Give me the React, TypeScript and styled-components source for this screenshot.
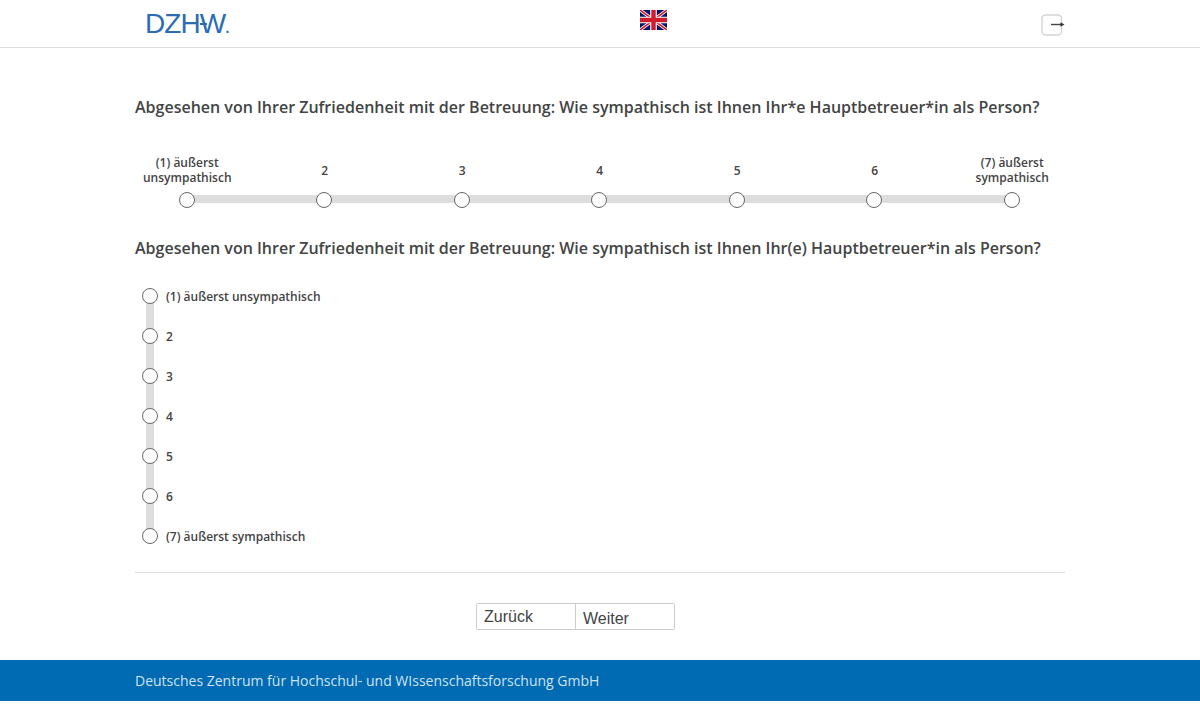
import React from "react"
import styled, { createGlobalStyle } from "styled-components"

const GlobalStyle = createGlobalStyle`
  html, body {
    margin: 0;
    padding: 0;
    background: #fff;
    font-family: "Open Sans", sans-serif;
    color: #444;
  }
`

const Header = styled.header`
  height: 47px;
  border-bottom: 1px solid #ddd;
`

const HeaderInner = styled.div`
  width: 930px;
  margin: 0 auto;
  height: 100%;
  display: grid;
  grid-template-columns: 505px 27px 1fr;
`

const Logo = styled.div`
  position: relative;
  margin: 9px 0 0 10px;
  width: 86px;
  height: 30px;
  font-family: "Liberation Sans", sans-serif;
  font-size: 28px;
  line-height: 30px;
  letter-spacing: -0.9px;
  color: #2b6cb5;
  white-space: nowrap;
`

const LogoBar = styled.span`
  position: absolute;
  left: 55px;
  top: 14px;
  width: 7px;
  height: 2px;
  background: #2b6cb5;
`

const LogoDot = styled.span`
  font-size: 14px;
  font-weight: 700;
  letter-spacing: 0;
`

const FlagLink = styled.a`
  display: block;
  margin-top: 10px;
  width: 27px;
  height: 20px;
`

const LogoutLink = styled.a`
  justify-self: end;
  display: block;
  margin-top: 13px;
  width: 25px;
  height: 24px;
`

const Main = styled.main`
  width: 930px;
  margin: 0 auto;
`

const Question = styled.h2<{ $top: number }>`
  margin: ${(p) => p.$top}px 0 0;
  font-size: 16px;
  line-height: 22px;
  font-weight: 600;
  color: #444;
  white-space: nowrap;
`

const ScaleLabels = styled.div`
  display: grid;
  grid-template-columns: repeat(7, 137.5px);
  margin: 34px 0 0 -16.5px;
  height: 36px;
`

const ScaleLabel = styled.div`
  align-self: center;
  text-align: center;
  font-size: 12px;
  line-height: 15px;
  font-weight: 600;
  color: #444;
`

const Rail = styled.div`
  display: flex;
  justify-content: space-between;
  align-items: center;
  width: 825px;
  height: 8px;
  margin: 7px 0 0 51.8px;
  background: #ddd;
`

const Radio = styled.span`
  flex: none;
  display: block;
  box-sizing: border-box;
  width: 16px;
  height: 16px;
  border: 1px solid #666;
  border-radius: 50%;
  background: #fff;
`

const RailRadio = styled(Radio)`
  margin: 2px -8px 0;
`

const VerticalList = styled.div`
  margin-top: 17px;
  background: linear-gradient(#ddd, #ddd) no-repeat 11px center / 8px 240px;
`

const VerticalRow = styled.div`
  display: flex;
  align-items: center;
  height: 40px;
  padding-left: 7px;
  gap: 8px;
  font-size: 12px;
  font-weight: 600;
  color: #444;
`

const Divider = styled.hr`
  margin: 16px 0 0;
  border: 0;
  border-top: 1px solid #ddd;
`

const ButtonGroup = styled.div`
  display: flex;
  width: 199px;
  margin: 30px 0 0 341px;
  box-sizing: border-box;
  border: 1px solid #ccc;
  border-radius: 2px;
  height: 27px;
`

const NavButton = styled.button<{ $raised?: boolean }>`
  flex: 1;
  padding: ${(p) => (p.$raised ? "1px 0 0 7px" : "5px 0 0 7px")};
  border: 0;
  background: #fff;
  font-family: "Liberation Sans", sans-serif;
  font-size: 16px;
  color: #444;
  text-align: left;
  & + & {
    border-left: 1px solid #ccc;
  }
`

const Footer = styled.footer`
  margin-top: 30px;
  height: 41px;
  background: #006ab3;
`

const FooterText = styled.div`
  width: 930px;
  margin: 0 auto;
  font-size: 14px;
  line-height: 41px;
  color: #cfe2f1;
`

const labels = ["(1) äußerst unsympathisch", "2", "3", "4", "5", "6", "(7) äußerst sympathisch"]

const FlagIcon = () => (
  <svg width="27" height="20" viewBox="0 0 27 20">
    <rect width="27" height="20" fill="#00146e" />
    <path d="M0 0 27 20M27 0 0 20" stroke="#fff" strokeWidth="3.2" />
    <path d="M0 0 27 20M27 0 0 20" stroke="#cf1b2b" strokeWidth="1.6" />
    <path d="M13.5 0V20M0 10H27" stroke="#fff" strokeWidth="6.6" />
    <path d="M13.5 0V20M0 10H27" stroke="#cf1b2b" strokeWidth="4.4" />
  </svg>
)

const LogoutIcon = () => (
  <svg width="25" height="24" viewBox="0 0 25 24" fill="none">
    <rect x="2" y="2" width="19.5" height="20" rx="3.5" stroke="#d4d4d4" strokeWidth="1.4" />
    <path d="M11 11.5H22" stroke="#444" strokeWidth="1.4" />
    <path d="M20.5 9.2 24.5 11.5 20.5 13.8Z" fill="#333" />
  </svg>
)

const App = () => {
  return (
    <>
      <GlobalStyle />
      <Header>
        <HeaderInner>
          <Logo>
            DZHW
            <LogoDot>.</LogoDot>
            <LogoBar />
          </Logo>
          <FlagLink>
            <FlagIcon />
          </FlagLink>
          <LogoutLink>
            <LogoutIcon />
          </LogoutLink>
        </HeaderInner>
      </Header>
      <Main>
        <Question $top={48}>
          Abgesehen von Ihrer Zufriedenheit mit der Betreuung: Wie sympathisch ist Ihnen Ihr*e Hauptbetreuer*in als Person?
        </Question>
        <ScaleLabels>
          {labels.map((label) => (
            <ScaleLabel key={label}>{label}</ScaleLabel>
          ))}
        </ScaleLabels>
        <Rail>
          {labels.map((label) => (
            <RailRadio key={label} />
          ))}
        </Rail>
        <Question $top={34}>
          Abgesehen von Ihrer Zufriedenheit mit der Betreuung: Wie sympathisch ist Ihnen Ihr(e) Hauptbetreuer*in als Person?
        </Question>
        <VerticalList>
          {labels.map((label) => (
            <VerticalRow key={label}>
              <Radio />
              {label}
            </VerticalRow>
          ))}
        </VerticalList>
        <Divider />
        <ButtonGroup>
          <NavButton $raised>Zurück</NavButton>
          <NavButton>Weiter</NavButton>
        </ButtonGroup>
      </Main>
      <Footer>
        <FooterText>Deutsches Zentrum für Hochschul- und WIssenschaftsforschung GmbH</FooterText>
      </Footer>
    </>
  )
}

export default App
